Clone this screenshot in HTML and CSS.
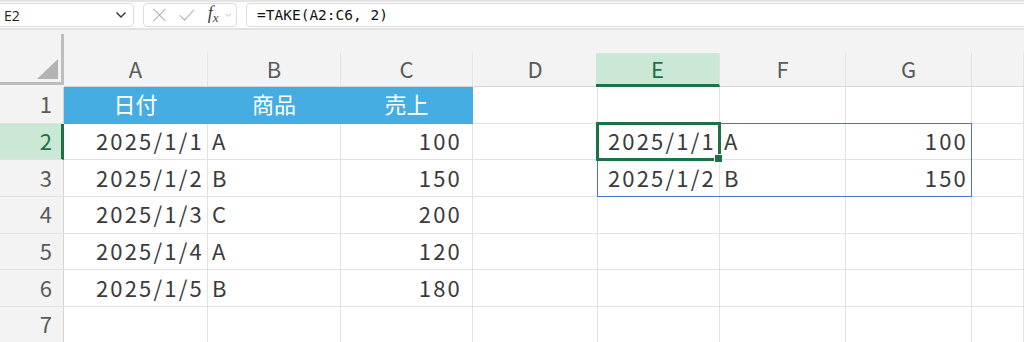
FILE: index.html
```html
<!DOCTYPE html>
<html lang="ja">
<head>
  <meta charset="UTF-8" />
  <title>TAKE</title>
  <link rel="stylesheet" href="styles.css">
</head>
<body>
  <div class="formula-bar">
    <div class="name-box">
      <span>E2</span>
      <svg class="chev" width="12" height="8" viewBox="0 0 12 8"><path d="M1.5 1.5 L6 6 L10.5 1.5" fill="none" stroke="#333" stroke-width="1.4"/></svg>
    </div>
    <div class="fx-box">
      <svg width="16" height="16" viewBox="0 0 16 16"><path d="M1.5 1.5 L14.5 14.5 M14.5 1.5 L1.5 14.5" stroke="#b5b5b5" stroke-width="1.2"/></svg>
      <svg width="17" height="14" viewBox="0 0 17 14"><path d="M1 7.5 L6 12.5 L16 1.5" fill="none" stroke="#b5b5b5" stroke-width="1.2"/></svg>
      <span class="fx">f<sub>x</sub></span>
      <svg width="7" height="5" viewBox="0 0 7 5"><path d="M1 1 L3.5 3.5 L6 1" fill="none" stroke="#b8b8b8" stroke-width="1"/></svg>
    </div>
    <div class="formula-input">=TAKE(A2:C6, 2)</div>
  </div>

  <div class="sheet">
    <div class="cells">
      <div class="corner"><div class="corner-box"><span class="tri"></span></div></div>
      <div class="top-gap"></div>

      <div class="col-head">A</div>
      <div class="col-head">B</div>
      <div class="col-head">C</div>
      <div class="col-head">D</div>
      <div class="col-head active">E</div>
      <div class="col-head">F</div>
      <div class="col-head">G</div>
      <div class="col-head"></div>

      <div class="row-head">1</div>
      <div class="c hd">日付</div>
      <div class="c hd">商品</div>
      <div class="c hd">売上</div>
      <div class="c"></div><div class="c"></div><div class="c"></div><div class="c"></div><div class="c"></div>

      <div class="row-head active">2</div>
      <div class="c num">2025/1/1</div>
      <div class="c">A</div>
      <div class="c num sales">100</div>
      <div class="c"></div>
      <div class="c num">2025/1/1</div>
      <div class="c">A</div>
      <div class="c num">100</div>
      <div class="c"></div>

      <div class="row-head">3</div>
      <div class="c num">2025/1/2</div>
      <div class="c">B</div>
      <div class="c num sales">150</div>
      <div class="c"></div>
      <div class="c num">2025/1/2</div>
      <div class="c">B</div>
      <div class="c num">150</div>
      <div class="c"></div>

      <div class="row-head">4</div>
      <div class="c num">2025/1/3</div>
      <div class="c">C</div>
      <div class="c num sales">200</div>
      <div class="c"></div><div class="c"></div><div class="c"></div><div class="c"></div><div class="c"></div>

      <div class="row-head">5</div>
      <div class="c num">2025/1/4</div>
      <div class="c">A</div>
      <div class="c num sales">120</div>
      <div class="c"></div><div class="c"></div><div class="c"></div><div class="c"></div><div class="c"></div>

      <div class="row-head">6</div>
      <div class="c num">2025/1/5</div>
      <div class="c">B</div>
      <div class="c num sales">180</div>
      <div class="c"></div><div class="c"></div><div class="c"></div><div class="c"></div><div class="c"></div>

      <div class="row-head">7</div>
      <div class="c"></div><div class="c"></div><div class="c"></div><div class="c"></div><div class="c"></div><div class="c"></div><div class="c"></div><div class="c"></div>
    </div>

    <!-- spill range + active cell, on a second layer with the same tracks -->
    <div class="overlay">
      <div class="spill"></div>
      <div class="selection"><span class="handle"></span></div>
    </div>
  </div>
</body>
</html>
```

FILE: styles.css
```css
body {
  margin: 0;
  background: #f3f3f3;
  font-family: "Noto Sans CJK JP", sans-serif;
  color: #3b3b3b;
  overflow: hidden;
}

.formula-bar {
  height: 30px;
  box-sizing: border-box;
  display: flex;
  align-items: center;
  gap: 9px;
  background: #fff;
  border-top: 2px solid #e4e4e4;
  border-bottom: 2px solid #e2e2e2;
}

.name-box,
.fx-box,
.formula-input {
  height: 24px;
  box-sizing: border-box;
  border: 1px solid #dcdcdc;
  border-radius: 4px;
  background: #fff;
  display: flex;
  align-items: center;
}

.name-box {
  width: 138px;
  margin-left: -4px;
  padding: 0 6px 0 7px;
  justify-content: space-between;
  font-family: "Open Sans", sans-serif;
  font-size: 14px;
  color: #222;
}

.fx-box {
  width: 94px;
  padding: 0 4px 0 8px;
  gap: 12px;
}

.fx {
  font-family: "Liberation Serif", serif;
  font-style: italic;
  font-size: 18px;
  line-height: 1;
  color: #444;
  margin-left: 1px;
  margin-right: -5px;
  margin-top: -3px;
}

.fx sub {
  font-size: 13px;
  vertical-align: -3px;
}

.formula-input {
  flex: 1;
  margin-right: -6px;
  padding-left: 10px;
  font-family: "DejaVu Sans Mono", monospace;
  font-size: 14.5px;
  color: #111;
}

.sheet {
  display: grid;
  font-size: 22px;
}

.cells,
.overlay {
  grid-area: 1 / 1;
  display: grid;
  grid-template-columns: 64px 144px 133px 132px 125px 122px 126px 126px 1fr;
  grid-template-rows: 23px 34px repeat(7, 36.67px);
}

.overlay {
  pointer-events: none;
  z-index: 1;
}

.corner {
  grid-row: 1 / 3;
  padding: 4px 0 2px 0;
}

.corner-box {
  height: 100%;
  box-sizing: border-box;
  border-right: 3px solid #bdbdbd;
  border-bottom: 3px solid #bdbdbd;
  display: flex;
  align-items: flex-end;
  justify-content: flex-end;
  padding: 0 3px 3px 0;
}

.tri {
  width: 21px;
  height: 20px;
  background: #b3b3b3;
  clip-path: polygon(100% 0, 100% 100%, 0 100%);
}

.top-gap {
  grid-column: 2 / -1;
}

.col-head {
  display: flex;
  align-items: center;
  justify-content: center;
  border-right: 1px solid #e2e2e2;
  border-bottom: 1px solid #d6d6d6;
  color: #5a5a5a;
  padding-bottom: 3px;
}

.col-head.active {
  background: #cae8d5;
  color: #1e7145;
  border-bottom: 3px solid #1e7145;
  padding-bottom: 1px;
  margin-left: -2px;
}

.row-head {
  display: flex;
  align-items: center;
  justify-content: flex-end;
  padding: 0 11px 3px 0;
  border-right: 1px solid #d6d6d6;
  border-bottom: 1px solid #e2e2e2;
  color: #5a5a5a;
}

.row-head.active {
  background: #cae8d5;
  color: #1e7145;
  border-right: 3px solid #1e7145;
  padding-right: 9px;
}

.c {
  display: flex;
  align-items: center;
  padding: 0 4px 3px 4px;
  background: #fff;
  border-right: 1px solid #e2e2e2;
  border-bottom: 1px solid #e2e2e2;
  white-space: nowrap;
  letter-spacing: 2.2px;
}

.c.num {
  justify-content: flex-end;
  padding-right: 3px;
}

.c.sales {
  padding-right: 10px;
}

.c.hd {
  justify-content: center;
  background: #45ade2;
  border-color: #45ade2;
  color: #fff;
  letter-spacing: 0;
}

.spill {
  grid-column: 6 / 9;
  grid-row: 4 / 6;
  margin: -1px 0 0 -1px;
  border: 1px solid #4677cf;
}

.selection {
  grid-column: 6 / 7;
  grid-row: 4 / 5;
  margin: -2px -1px -1px -2px;
  border: 3px solid #1e7145;
  position: relative;
}

.handle {
  position: absolute;
  right: -5px;
  bottom: -5px;
  width: 7px;
  height: 7px;
  background: #1e7145;
  border: 1px solid #fff;
}
```
